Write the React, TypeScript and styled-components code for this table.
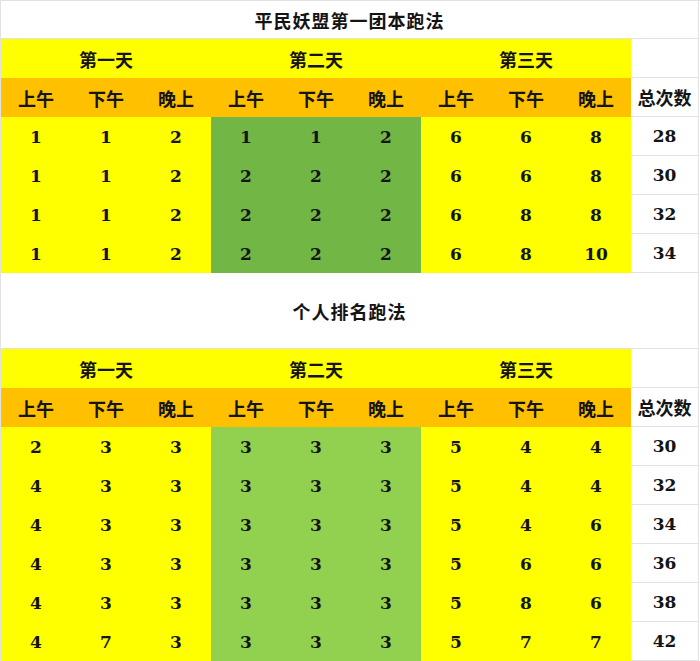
import styled, { createGlobalStyle } from 'styled-components';

const GlobalStyle = createGlobalStyle`
  html, body {
    margin: 0;
    padding: 0;
    background: #ffffff;
  }
  body {
    font-family: 'DejaVu Serif', 'Noto Sans CJK SC', serif;
    color: #141414;
  }
`;

const gridLine = '#e2e2e2';
const yellow = '#ffff00';
const orange = '#ffc000';
const greenDark = '#72b645';
const greenLight = '#92d050';

type Fill = 'white' | 'yellow' | 'orange' | 'green' | 'lime';

const fills: Record<Fill, string> = {
  white: '#ffffff',
  yellow,
  orange,
  green: greenDark,
  lime: greenLight,
};

const Page = styled.div`
  width: 700px;
  height: 661px;
  overflow: hidden;
  box-sizing: border-box;
  border-top: 1px solid ${gridLine};
  border-left: 1px solid ${gridLine};
`;

// first row is the title, the rest are 39px sheet rows
const Sheet = styled.div<{ $titleHeight: number }>`
  display: grid;
  grid-template-columns: repeat(9, 70px) 68px;
  grid-template-rows: ${(p) => p.$titleHeight}px;
  grid-auto-rows: 39px;
`;

const Cell = styled.div<{ $fill: Fill; $span?: number }>`
  grid-column: span ${(p) => p.$span ?? 1};
  display: flex;
  align-items: center;
  justify-content: center;
  box-sizing: border-box;
  background: ${(p) => fills[p.$fill]};
  font-size: 18px;
  font-weight: 700;
  ${(p) =>
    p.$fill === 'white'
      ? `border-right: 1px solid ${gridLine}; border-bottom: 1px solid ${gridLine};`
      : ''}
`;

const Num = styled.span`
  font-size: 17px;
  font-weight: 600;
`;

const Title = styled(Cell)`
  grid-column: 1 / -1;
  letter-spacing: 1px;
`;

const days = ['第一天', '第二天', '第三天'];
const periods = ['上午', '下午', '晚上'];

interface TableProps {
  title: string;
  titleHeight: number;
  green: Fill;
  rows: number[][];
}

function RunTable({ title, titleHeight, green, rows }: TableProps) {
  return (
    <Sheet $titleHeight={titleHeight}>
      <Title $fill="white">{title}</Title>
      {days.map((d) => (
        <Cell key={d} $fill="yellow" $span={3}>
          {d}
        </Cell>
      ))}
      <Cell $fill="white" />
      {days.map((d) =>
        periods.map((p) => (
          <Cell key={d + p} $fill="orange">
            {p}
          </Cell>
        ))
      )}
      <Cell $fill="white">总次数</Cell>
      {rows.map((row, r) => {
        const total = row.reduce((a, b) => a + b, 0);
        return [
          ...row.map((v, i) => (
            <Cell
              key={`${r}-${i}`}
              $fill={i >= 3 && i < 6 ? green : 'yellow'}
            >
              <Num>{v}</Num>
            </Cell>
          )),
          <Cell key={`${r}-t`} $fill="white">
            <Num>{total}</Num>
          </Cell>,
        ];
      })}
    </Sheet>
  );
}

const teamRows = [
  [1, 1, 2, 1, 1, 2, 6, 6, 8],
  [1, 1, 2, 2, 2, 2, 6, 6, 8],
  [1, 1, 2, 2, 2, 2, 6, 8, 8],
  [1, 1, 2, 2, 2, 2, 6, 8, 10],
];

const soloRows = [
  [2, 3, 3, 3, 3, 3, 5, 4, 4],
  [4, 3, 3, 3, 3, 3, 5, 4, 4],
  [4, 3, 3, 3, 3, 3, 5, 4, 6],
  [4, 3, 3, 3, 3, 3, 5, 6, 6],
  [4, 3, 3, 3, 3, 3, 5, 8, 6],
  [4, 7, 3, 3, 3, 3, 5, 7, 7],
];

export default function App() {
  return (
    <>
      <GlobalStyle />
      <Page>
        <RunTable
          title="平民妖盟第一团本跑法"
          titleHeight={38}
          green="green"
          rows={teamRows}
        />
        <RunTable
          title="个人排名跑法"
          titleHeight={76}
          green="lime"
          rows={soloRows}
        />
      </Page>
    </>
  );
}
